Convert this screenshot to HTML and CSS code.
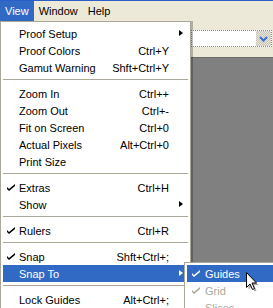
FILE: index.html
```html
<!DOCTYPE html>
<html lang="en">
<head>
    <meta charset="UTF-8">
    <title>View menu</title>
    <link rel="stylesheet" href="styles.css">
</head>
<body>
    <div class="titlebar"></div>
    <nav class="menubar">
        <span class="mb-item active">View</span>
        <span class="mb-item">Window</span>
        <span class="mb-item">Help</span>
    </nav>

    <div class="toolbar">
        <div class="combo">
            <span class="combo-field"></span>
            <span class="combo-btn">
                <svg width="9" height="6" viewBox="0 0 9 6"><path d="M1 1 L4.5 4.5 L8 1" fill="none" stroke="#3a6ed0" stroke-width="2"/></svg>
            </span>
        </div>
    </div>

    <div class="canvas-area"></div>

    <!-- View dropdown -->
    <ul class="menu">
        <li class="item"><span class="label">Proof Setup</span><span class="key"></span><span class="arrow"></span></li>
        <li class="item"><span class="label">Proof Colors</span><span class="key">Ctrl+Y</span></li>
        <li class="item"><span class="label">Gamut Warning</span><span class="key">Shft+Ctrl+Y</span></li>
        <li class="sep"></li>
        <li class="item"><span class="label">Zoom In</span><span class="key">Ctrl++</span></li>
        <li class="item"><span class="label">Zoom Out</span><span class="key">Ctrl+-</span></li>
        <li class="item"><span class="label">Fit on Screen</span><span class="key">Ctrl+0</span></li>
        <li class="item"><span class="label">Actual Pixels</span><span class="key">Alt+Ctrl+0</span></li>
        <li class="item"><span class="label">Print Size</span></li>
        <li class="sep"></li>
        <li class="item checked"><span class="check"></span><span class="label">Extras</span><span class="key">Ctrl+H</span></li>
        <li class="item"><span class="label">Show</span><span class="key"></span><span class="arrow"></span></li>
        <li class="sep"></li>
        <li class="item checked"><span class="check"></span><span class="label">Rulers</span><span class="key">Ctrl+R</span></li>
        <li class="sep"></li>
        <li class="item checked"><span class="check"></span><span class="label">Snap</span><span class="key">Shft+Ctrl+;</span></li>
        <li class="item hot"><span class="label">Snap To</span><span class="key"></span><span class="arrow"></span></li>
        <li class="sep"></li>
        <li class="item"><span class="label">Lock Guides</span><span class="key">Alt+Ctrl+;</span></li>
    </ul>

    <!-- Snap To submenu -->
    <ul class="menu submenu">
        <li class="item hot checked"><span class="check"></span><span class="label">Guides</span></li>
        <li class="item off checked"><span class="check"></span><span class="label">Grid</span></li>
        <li class="item off"><span class="label">Slices</span></li>
    </ul>

    <svg class="cursor" width="14" height="22" viewBox="0 0 14 22">
        <path d="M2.5 2.5 L2.5 17.5 L6 14 L8.5 19.5 L10.5 18.5 L8 13 L12.5 13 Z" fill="#000" opacity="0.35"/>
        <path d="M0.5 0.5 L0.5 15.5 L4 12 L6.5 17.5 L8.5 16.5 L6 11 L10.5 11 Z" fill="#fff" stroke="#000" stroke-width="1"/>
    </svg>
</body>
</html>
```

FILE: styles.css
```css
:root {
    --xp-beige: #ece9d8;
    --xp-blue: #316ac5;
    --menu-border: #aca899;
    --menu-font: "Liberation Sans", Arial, sans-serif;
}

* {
    box-sizing: border-box;
}

html, body {
    height: 100%;
}

body {
    margin: 0;
    display: flex;
    flex-direction: column;
    overflow: hidden;
    background: var(--xp-beige);
    font-family: var(--menu-font);
    font-size: 11px;
    color: #000;
}

.titlebar {
    height: 1px;
    background: #2b5fc7;
}

.menubar {
    height: 20px;
    display: flex;
    align-items: stretch;
    background: var(--xp-beige);
}

.mb-item {
    display: flex;
    align-items: center;
    padding: 0 5px;
}

.mb-item.active {
    background: var(--xp-blue);
    color: #fff;
}

.toolbar {
    height: 36px;
    display: flex;
    justify-content: flex-end;
    align-items: flex-start;
    padding: 9px 1px 0 0;
    background: var(--xp-beige);
}

.combo {
    width: 81px;
    height: 17px;
    display: flex;
    border: 1px dotted #8e8c80;
    background: #fff;
}

.combo-field {
    flex: 1;
}

.combo-btn {
    width: 15px;
    display: flex;
    align-items: center;
    justify-content: center;
    background: repeating-conic-gradient(#c9c6b8 0 25%, #e6e4da 0 50%) 0 0 / 2px 2px;
}

.canvas-area {
    flex: 1;
    background: #808080;
    border-top: 1px solid #6b6b6b;
}

/* Dropdown menus */
.menu {
    position: absolute;
    left: 0;
    top: 21px;
    width: 191px;
    height: 287px;
    margin: 0;
    padding: 3px 0 0;
    list-style: none;
    overflow: hidden;
    background: #fff;
    border: 1px solid var(--menu-border);
    border-bottom: none;
    box-shadow: 2px 0 0 rgba(0, 0, 0, 0.25);
}

.item {
    position: relative;
    height: 17px;
    margin: 0 2px;
    display: flex;
    align-items: center;
    padding: 0 19px 0 16px;
    white-space: nowrap;
}

.item .label {
    flex: 1;
}

.item .key {
    text-align: right;
}

.item .arrow {
    position: absolute;
    right: 5px;
    top: 5px;
    width: 0;
    height: 0;
    border-left: 4px solid #000;
    border-top: 3.5px solid transparent;
    border-bottom: 3.5px solid transparent;
}

.item .check {
    position: absolute;
    left: 4px;
    top: 5px;
    width: 8px;
    height: 7px;
    background: #000;
    clip-path: polygon(0 43%, 25% 71%, 100% 0, 100% 29%, 25% 100%, 0 71%);
}

.item.hot {
    background: var(--xp-blue);
    color: #fff;
}

.item.hot .arrow {
    border-left-color: #fff;
}

.item.hot .check {
    background: #fff;
}

.item.off {
    color: var(--menu-border);
}

.item.off .check {
    background: var(--menu-border);
}

.sep {
    height: 9px;
    margin: 0 2px;
    padding-top: 3px;
}

.sep::before {
    content: "";
    display: block;
    border-top: 1px solid var(--menu-border);
}

.submenu {
    left: 184px;
    top: 262px;
    width: 89px;
    height: 46px;
    padding-top: 2px;
    border-right: none;
    box-shadow: none;
}

.submenu .item {
    margin-right: 0;
    padding-left: 18px;
}

.submenu .item .check {
    left: 5px;
}

.cursor {
    position: absolute;
    left: 246px;
    top: 272px;
}
```
